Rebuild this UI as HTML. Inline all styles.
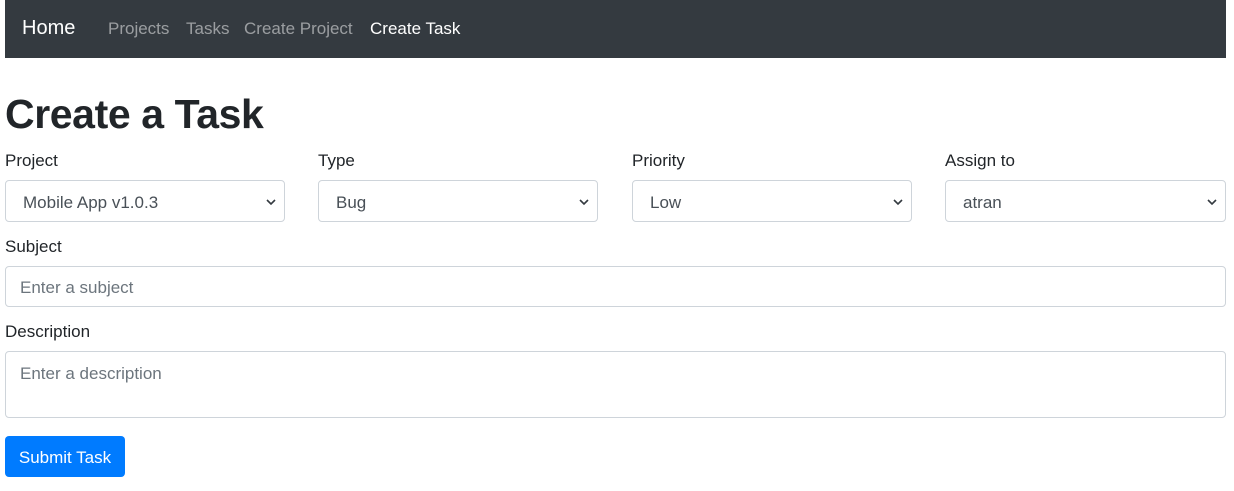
<!DOCTYPE html>
<html><head><meta charset="utf-8"><style>
*{box-sizing:border-box;margin:0;padding:0}
body{width:1234px;height:491px;background:#fff;font-family:"Liberation Sans",sans-serif;color:#212529;position:relative;overflow:hidden}
.nav{position:absolute;left:5px;top:0;width:1221px;height:58px;background:#343a40}
.nav span{position:absolute;top:19px;font-size:17px;color:rgba(255,255,255,.5)}
.a{position:absolute}
h1{position:absolute;left:5px;top:91px;font-size:41px;font-weight:700;letter-spacing:-.4px;color:#212529}
.lbl{position:absolute;font-size:17px}
.box{position:absolute;border:1px solid #ced4da;border-radius:4px;background:#fff;font-size:17px;color:#495057;padding-left:17px}
.sel{height:42px;top:180px;width:280px;line-height:43px}
.sel svg{position:absolute;right:8px;top:16px}
.ph{color:#6c757d}
</style></head><body>
<div class="nav">
<span style="left:17px;top:17px;font-size:20px;color:#fff">Home</span>
<span style="left:103px">Projects</span>
<span style="left:181px">Tasks</span>
<span style="left:239px">Create Project</span>
<span style="left:365px;color:#fff">Create Task</span>
</div>
<h1>Create a Task</h1>
<div class="lbl" style="left:5px;top:151px">Project</div>
<div class="lbl" style="left:318px;top:151px">Type</div>
<div class="lbl" style="left:632px;top:151px">Priority</div>
<div class="lbl" style="left:945px;top:151px">Assign to</div>
<div class="box sel" style="left:5px">Mobile App v1.0.3<svg width="10" height="10" viewBox="0 0 10 10"><path d="M1 3l4 4 4-4" stroke="#343a40" stroke-width="1.6" fill="none"/></svg></div>
<div class="box sel" style="left:318px">Bug<svg width="10" height="10" viewBox="0 0 10 10"><path d="M1 3l4 4 4-4" stroke="#343a40" stroke-width="1.6" fill="none"/></svg></div>
<div class="box sel" style="left:632px">Low<svg width="10" height="10" viewBox="0 0 10 10"><path d="M1 3l4 4 4-4" stroke="#343a40" stroke-width="1.6" fill="none"/></svg></div>
<div class="box sel" style="left:945px;width:281px">atran<svg width="10" height="10" viewBox="0 0 10 10"><path d="M1 3l4 4 4-4" stroke="#343a40" stroke-width="1.6" fill="none"/></svg></div>
<div class="lbl" style="left:5px;top:237px">Subject</div>
<div class="box ph" style="left:5px;top:266px;width:1221px;height:41px;line-height:42px;padding-left:14px">Enter a subject</div>
<div class="lbl" style="left:5px;top:322px">Description</div>
<div class="box ph" style="left:5px;top:351px;width:1221px;height:67px;padding:12px 0 0 14px">Enter a description</div>
<div class="a" style="left:5px;top:436px;width:120px;height:41px;background:#007bff;border-radius:4px;color:#fff;font-size:17px;line-height:43px;text-align:center">Submit Task</div>
</body></html>
